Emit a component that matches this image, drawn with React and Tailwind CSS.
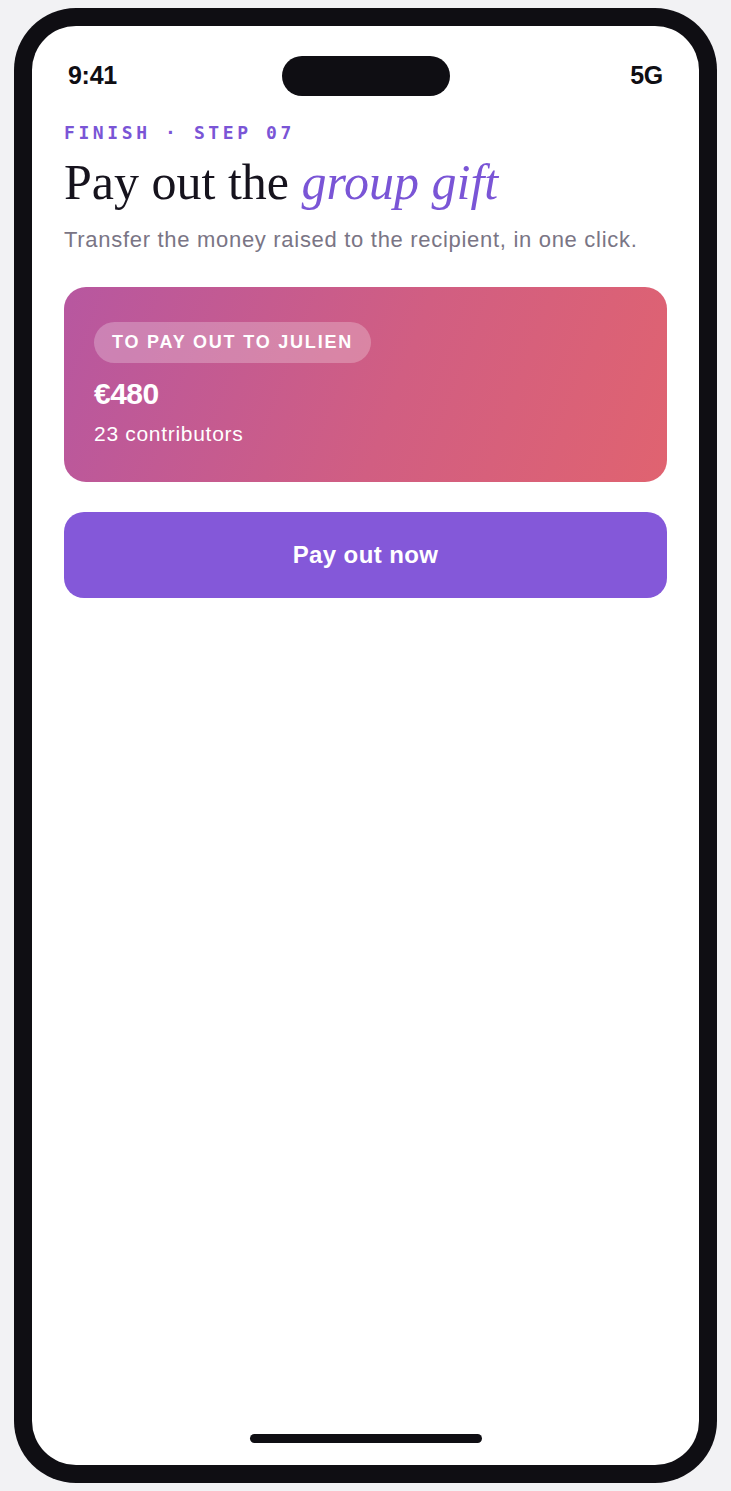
export default function App() {
  const sans = { fontFamily: '"Liberation Sans", Arial, sans-serif' };
  return (
    <div className="min-h-screen bg-[#f2f2f4] pt-[8px] pl-[14px]">
      <div className="w-[703px] h-[1475px] bg-[#0f0e13] rounded-[62px] p-[18px]">
        <div className="w-full h-full bg-white rounded-[44px] flex flex-col overflow-hidden">
          <div className="grid grid-cols-[1fr_auto_1fr] items-center px-[36px] pt-[30px] h-[70px]">
            <span className="text-[25px] font-bold text-[#0f0e13] tracking-[-0.3px] justify-self-start" style={sans}>9:41</span>
            <div className="w-[168px] h-[40px] rounded-full bg-[#0f0e13]" />
            <span className="text-[25px] font-bold text-[#0f0e13] tracking-[-0.3px] justify-self-end" style={sans}>5G</span>
          </div>
          <div className="px-[32px] pt-[25px] flex flex-col">
            <div className="text-[18px] font-bold tracking-[3.6px] text-[#7a55d6] leading-[24px]" style={{ fontFamily: '"DejaVu Sans Mono", "Liberation Mono", monospace' }}>FINISH · STEP 07</div>
            <h1 className="mt-[8px] text-[50px] leading-[58px] text-[#16131d]" style={{ fontFamily: '"Liberation Serif", "Times New Roman", serif' }}>
              Pay out the <em className="text-[#7a55d6] italic">group gift</em>
            </h1>
            <p className="mt-[15px] text-[22px] leading-[28px] tracking-[0.7px] text-[#7a7585]" style={sans}>Transfer the money raised to the recipient, in one click.</p>
            <div className="mt-[33px] rounded-[22px] bg-[linear-gradient(110deg,#b757a0_0%,#d15e82_55%,#e06370_100%)] h-[195px] px-[30px] pt-[35px] flex flex-col items-start" style={sans}>
              <div className="h-[41px] px-[18px] rounded-full bg-white/25 flex items-center text-[18px] font-bold text-white tracking-[1.8px]">TO PAY OUT TO JULIEN</div>
              <div className="mt-[13px] text-[30px] font-bold text-white leading-[36px] tracking-[-0.5px]">€480</div>
              <div className="mt-[9px] text-[21px] text-white leading-[26px] tracking-[0.7px]">23 contributors</div>
            </div>
            <button className="mt-[30px] h-[86px] rounded-[20px] bg-[#8458d9] text-white text-[24px] font-bold tracking-[0.4px]" style={sans}>Pay out now</button>
          </div>
          <div className="mt-auto pb-[22px] flex justify-center">
            <div className="w-[232px] h-[9px] rounded-full bg-[#0f0e13]" />
          </div>
        </div>
      </div>
    </div>
  );
}
